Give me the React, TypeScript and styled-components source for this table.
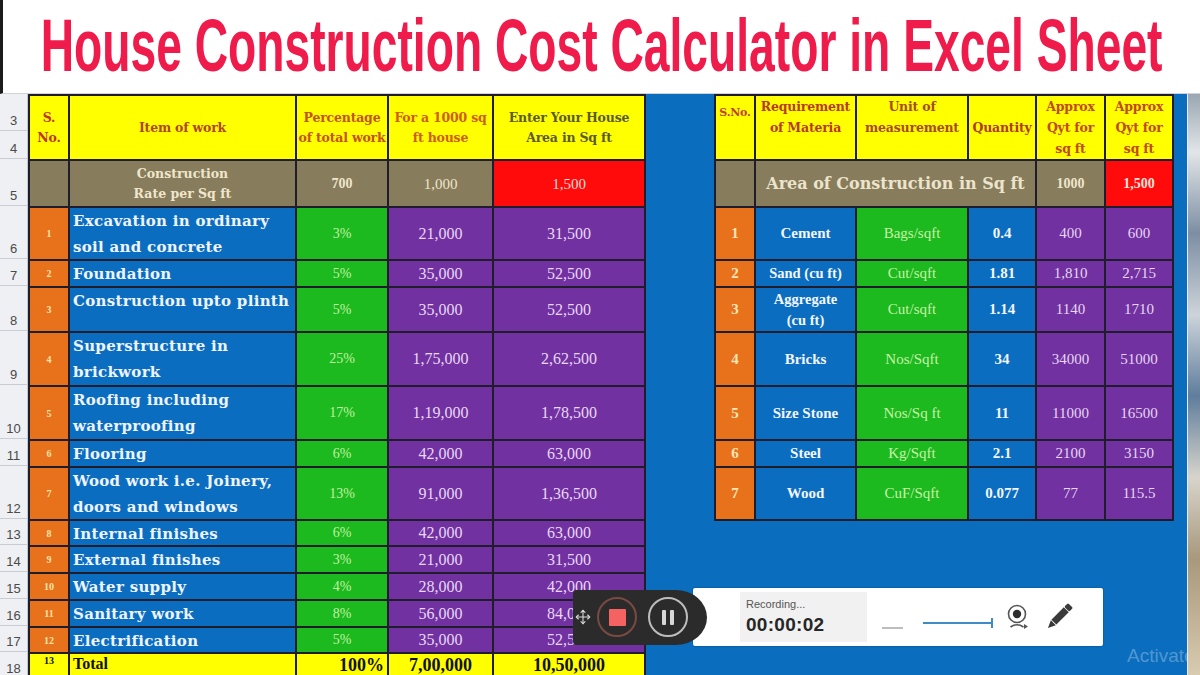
import React from "react";
import styled, { createGlobalStyle } from "styled-components";
import { Move } from "lucide-react";

const GlobalStyle = createGlobalStyle`
  html, body { margin: 0; padding: 0; width: 1200px; height: 675px; overflow: hidden; background: #fff; }
  #root { width: 1200px; height: 675px; }
  * { box-sizing: border-box; }
`;

const C = {
  yellow: "#ffff00",
  olive: "#877c5b",
  blue: "#0b6dbf",
  sheet: "#0a6dbe",
  orange: "#e8711c",
  green: "#1cb91f",
  purple: "#7131a1",
  red: "#ff0b0b",
  line: "#1f1c2c",
};

const SERIF = `"DejaVu Serif", "Liberation Serif", serif`;
const TIMES = `"Liberation Serif", "DejaVu Serif", serif`;
const SANS = `"Liberation Sans", Arial, sans-serif`;

const Page = styled.div`
  position: relative;
  width: 1200px;
  height: 675px;
  display: flex;
  flex-direction: column;
  overflow: hidden;
`;

const TitleBar = styled.header`
  height: 94px;
  flex-shrink: 0;
  display: flex;
  justify-content: center;
  padding-top: 8px;
  border-left: 3px solid #1b1b1b;
  border-bottom: 1px solid #cfd3d8;
  background: #fff;
  overflow: hidden;
`;

const Title = styled.h1`
  margin: 0;
  flex-shrink: 0;
  white-space: nowrap;
  font-family: ${SANS};
  font-weight: 700;
  font-size: 75px;
  line-height: 75px;
  color: #ee1b4b;
  transform: scaleX(0.616);
`;

const Sheet = styled.main`
  flex: 1;
  display: flex;
  align-items: flex-start;
  background: ${C.sheet};
  overflow: hidden;
`;

const RowHeads = styled.div`
  width: 28px;
  flex-shrink: 0;
  display: flex;
  flex-direction: column;
  background: #eef0f3;
  border-right: 1px solid #c3c8cf;
`;

const RowHead = styled.div<{ $h: number }>`
  height: ${(p) => p.$h}px;
  display: flex;
  align-items: flex-end;
  justify-content: center;
  padding-bottom: 2px;
  border-bottom: 1px solid #c9cdd3;
  font-family: ${SANS};
  font-size: 13px;
  color: #4a4a4a;
`;

const Grid = styled.div<{ $cols: string; $rows: string; $ml?: number }>`
  display: grid;
  grid-template-columns: ${(p) => p.$cols};
  grid-template-rows: ${(p) => p.$rows};
  gap: 2px;
  background: ${C.line};
  border: 2px solid ${C.line};
  flex-shrink: 0;
  margin-left: ${(p) => p.$ml ?? 0}px;
`;

const Cell = styled.div<{
  $bg: string;
  $color?: string;
  $align?: "left" | "center" | "right";
  $top?: boolean;
  $span?: number;
}>`
  background: ${(p) => p.$bg};
  color: ${(p) => p.$color ?? "#fff"};
  display: flex;
  align-items: ${(p) => (p.$top ? "flex-start" : "center")};
  justify-content: ${(p) =>
    p.$align === "left" ? "flex-start" : p.$align === "right" ? "flex-end" : "center"};
  text-align: ${(p) => p.$align ?? "center"};
  padding: 0 3px;
  overflow: hidden;
  white-space: nowrap;
  grid-column: ${(p) => (p.$span ? `span ${p.$span}` : "auto")};
`;

const HeadCell = styled(Cell)`
  font-family: ${SERIF};
  font-weight: 700;
  font-size: 12.5px;
  line-height: 20px;
  letter-spacing: -0.2px;
`;

const RHeadCell = styled(HeadCell)`
  line-height: 21px;
`;

const RSnoHead = styled(RHeadCell)`
  padding-top: 6px;
  font-size: 11px;
`;

const RateCell = styled(Cell)<{ $size?: number; $bold?: boolean; $serif?: boolean }>`
  font-family: ${(p) => (p.$serif ? SERIF : TIMES)};
  font-weight: ${(p) => (p.$bold ? 700 : 400)};
  font-size: ${(p) => p.$size ?? 15}px;
  line-height: 20px;
`;

const SnoCell = styled(Cell)`
  font-family: ${TIMES};
  font-weight: 700;
  font-size: 10px;
  color: #fbe3a5;
`;

const ItemCell = styled(Cell)`
  font-family: ${SERIF};
  font-weight: 700;
  font-size: 15px;
  line-height: 26px;
  letter-spacing: 0.3px;
  color: #eef4ff;
  padding-left: 3px;
`;

const PctCell = styled(Cell)`
  font-family: ${TIMES};
  font-size: 14px;
  color: #c2f2a2;
`;

const NumCell = styled(Cell)`
  font-family: ${TIMES};
  font-size: 16px;
  color: #e8d8f4;
`;

const TotalCell = styled(Cell)<{ $size?: number }>`
  font-family: ${TIMES};
  font-weight: 700;
  font-size: ${(p) => p.$size ?? 18}px;
  color: #111;
  align-items: flex-start;
  padding-top: 1px;
`;

const RSnoCell = styled(Cell)`
  font-family: ${TIMES};
  font-weight: 700;
  font-size: 15px;
  color: #fbe6b6;
`;

const RNameCell = styled(Cell)<{ $size?: number }>`
  font-family: ${TIMES};
  font-weight: 700;
  font-size: ${(p) => p.$size ?? 15}px;
  line-height: 21px;
  color: #f2f6ff;
`;

const RUnitCell = styled(Cell)`
  font-family: ${TIMES};
  font-size: 15px;
  color: #c6f4a6;
`;

const RQtyCell = styled(Cell)`
  font-family: ${TIMES};
  font-weight: 700;
  font-size: 15px;
  color: #f2f6ff;
`;

const RNumCell = styled(Cell)`
  font-family: ${TIMES};
  font-size: 15px;
  color: #e6d6f2;
`;

const BlueFill = styled.div`
  flex: 1;
`;

const Photo = styled.div`
  position: relative;
  z-index: 2;
  width: 13px;
  height: 100%;
  flex-shrink: 0;
  border-left: 1px solid #e8eef4;
  background: linear-gradient(
    180deg,
    #9aa6b2 0%,
    #e2e5e8 10%,
    #7d8ea3 24%,
    #cdd3da 38%,
    #5f7d9c 52%,
    #d8d4cc 66%,
    #a8987c 80%,
    #d9cbb0 100%
  );
`;

const Watermark = styled.div`
  position: absolute;
  z-index: 1;
  left: 1127px;
  top: 645px;
  font-family: ${SANS};
  font-size: 19px;
  color: rgba(255, 255, 255, 0.3);
`;

/* ---------- recorder overlay ---------- */
const Recorder = styled.div`
  position: absolute;
  z-index: 3;
  left: 573px;
  top: 588px;
  display: flex;
  align-items: center;
`;

const RecControls = styled.div`
  position: relative;
  z-index: 1;
  width: 134px;
  height: 55px;
  background: #2b2b2b;
  border-radius: 4px 32px 32px 4px / 4px 28px 28px 4px;
  display: flex;
  align-items: center;
  padding-left: 2px;
  color: #dcdcdc;
`;

const CircleBtn = styled.div<{ $ring: string; $ml: number }>`
  width: 40px;
  height: 40px;
  margin-left: ${(p) => p.$ml}px;
  border-radius: 50%;
  border: 2px solid ${(p) => p.$ring};
  display: flex;
  align-items: center;
  justify-content: center;
  gap: 4px;
`;

const StopSquare = styled.div`
  width: 17px;
  height: 17px;
  background: #f46262;
  border-radius: 1px;
`;

const PauseBar = styled.div`
  width: 4px;
  height: 15px;
  background: #d8d8d8;
  border-radius: 1px;
`;

const RecPanel = styled.div`
  margin-left: -14px;
  width: 410px;
  height: 58px;
  background: #fff;
  border-radius: 2px;
  box-shadow: 0 0 2px rgba(0, 0, 0, 0.35);
  display: flex;
  align-items: center;
  padding-left: 47px;
`;

const TimerBox = styled.div`
  width: 127px;
  height: 50px;
  background: #f1f1f1;
  display: flex;
  flex-direction: column;
  justify-content: center;
  padding-left: 6px;
  font-family: ${SANS};
`;

const RecLabel = styled.div`
  font-size: 11px;
  color: #555;
`;

const RecTime = styled.div`
  margin-top: 4px;
  font-size: 19px;
  font-weight: 700;
  color: #262626;
  letter-spacing: 0.3px;
`;

const Dash = styled.div`
  width: 21px;
  height: 2px;
  margin-left: 15px;
  margin-top: 22px;
  background: #bdbdbd;
`;

const Slider = styled.div`
  position: relative;
  width: 70px;
  height: 2px;
  margin-left: 20px;
  margin-top: 12px;
  background: #3f8cc4;
  &::after {
    content: "";
    position: absolute;
    right: 0;
    top: -4px;
    width: 2px;
    height: 10px;
    background: #3f8cc4;
  }
`;

const IconWrap = styled.div<{ $ml: number }>`
  margin-left: ${(p) => p.$ml}px;
  display: flex;
  align-items: center;
`;

const WebcamIcon = () => (
  <svg width="24" height="28" viewBox="0 0 24 28">
    <circle cx="11" cy="11" r="8.5" fill="#fff" stroke="#555" strokeWidth="1.6" />
    <circle cx="11" cy="11" r="4.2" fill="#2e2e2e" />
    <path d="M4.5 24 Q11 19.5 17.5 24" fill="none" stroke="#555" strokeWidth="1.6" />
    <path d="M18 21 L22 23.5 L18 26 Z" fill="#555" />
  </svg>
);

const PencilIcon = () => (
  <svg width="30" height="30" viewBox="0 0 24 24">
    <g transform="rotate(45 12 12)">
      <rect x="9.2" y="-1" width="5.6" height="4.2" rx="1" fill="#3a3a3a" />
      <rect x="9.2" y="3.8" width="5.6" height="14" fill="#3a3a3a" />
      <path d="M9.2 18.4 L14.8 18.4 L12 24.5 Z" fill="#3a3a3a" />
    </g>
  </svg>
);

/* ---------- data ---------- */
const rowHeights = [37, 28, 47, 53, 27, 45, 54, 54, 27, 53, 26, 27, 27, 27, 26, 27];

const leftRows: { n: string; item: React.ReactNode; pct: string; a: string; b: string }[] = [
  { n: "1", item: <>Excavation in ordinary<br />soil and concrete</>, pct: "3%", a: "21,000", b: "31,500" },
  { n: "2", item: "Foundation", pct: "5%", a: "35,000", b: "52,500" },
  { n: "3", item: "Construction upto plinth", pct: "5%", a: "35,000", b: "52,500" },
  { n: "4", item: <>Superstructure in<br />brickwork</>, pct: "25%", a: "1,75,000", b: "2,62,500" },
  { n: "5", item: <>Roofing including<br />waterproofing</>, pct: "17%", a: "1,19,000", b: "1,78,500" },
  { n: "6", item: "Flooring", pct: "6%", a: "42,000", b: "63,000" },
  { n: "7", item: <>Wood work i.e. Joinery,<br />doors and windows</>, pct: "13%", a: "91,000", b: "1,36,500" },
  { n: "8", item: "Internal finishes", pct: "6%", a: "42,000", b: "63,000" },
  { n: "9", item: "External finishes", pct: "3%", a: "21,000", b: "31,500" },
  { n: "10", item: "Water supply", pct: "4%", a: "28,000", b: "42,000" },
  { n: "11", item: "Sanitary work", pct: "8%", a: "56,000", b: "84,000" },
  { n: "12", item: "Electrification", pct: "5%", a: "35,000", b: "52,500" },
];

const rightRows: { n: string; name: React.ReactNode; small?: boolean; unit: string; q: string; a: string; b: string }[] = [
  { n: "1", name: "Cement", unit: "Bags/sqft", q: "0.4", a: "400", b: "600" },
  { n: "2", name: "Sand (cu ft)", small: true, unit: "Cut/sqft", q: "1.81", a: "1,810", b: "2,715" },
  { n: "3", name: <>Aggregate<br />(cu ft)</>, small: true, unit: "Cut/sqft", q: "1.14", a: "1140", b: "1710" },
  { n: "4", name: "Bricks", unit: "Nos/Sqft", q: "34", a: "34000", b: "51000" },
  { n: "5", name: "Size Stone", unit: "Nos/Sq ft", q: "11", a: "11000", b: "16500" },
  { n: "6", name: "Steel", unit: "Kg/Sqft", q: "2.1", a: "2100", b: "3150" },
  { n: "7", name: "Wood", unit: "CuF/Sqft", q: "0.077", a: "77", b: "115.5" },
];

const leftCols = "38px 225px 90px 103px 150px";
const leftRowsTpl = "63px 45px 51px 25px 43px 52px 52px 25px 51px 24px 25px 25px 25px 24px 25px";
const rightCols = "38px 99px 110px 66px 67px 66px";
const rightRowsTpl = "63px 45px 51px 25px 43px 52px 52px 25px 51px";

export default function App() {
  return (
    <>
      <GlobalStyle />
      <Page>
        <TitleBar>
          <Title>House Construction Cost Calculator in Excel Sheet</Title>
        </TitleBar>
        <Sheet>
          <RowHeads>
            {rowHeights.map((h, i) => (
              <RowHead key={i} $h={h}>
                {i + 3}
              </RowHead>
            ))}
          </RowHeads>

          <Grid $cols={leftCols} $rows={leftRowsTpl}>
            <HeadCell $bg={C.yellow} $color="#c0351e">S.<br />No.</HeadCell>
            <HeadCell $bg={C.yellow} $color="#b0461c">Item of work</HeadCell>
            <HeadCell $bg={C.yellow} $color="#c4531a">Percentage<br />of total work</HeadCell>
            <HeadCell $bg={C.yellow} $color="#cf5d12">For a 1000 sq<br />ft house</HeadCell>
            <HeadCell $bg={C.yellow} $color="#5c5a30">Enter Your House<br />Area in Sq ft</HeadCell>

            <RateCell $bg={C.olive} />
            <RateCell $bg={C.olive} $color="#efe6cc" $serif $bold $size={12.5}>
              Construction<br />Rate per Sq ft
            </RateCell>
            <RateCell $bg={C.olive} $color="#efe6cc" $bold $size={14}>700</RateCell>
            <RateCell $bg={C.olive} $color="#efe6cc">1,000</RateCell>
            <RateCell $bg={C.red} $color="#ffdcd4">1,500</RateCell>

            {leftRows.map((r) => (
              <React.Fragment key={r.n}>
                <SnoCell $bg={C.orange}>{r.n}</SnoCell>
                <ItemCell $bg={C.blue} $align="left" $top>{r.item}</ItemCell>
                <PctCell $bg={C.green}>{r.pct}</PctCell>
                <NumCell $bg={C.purple}>{r.a}</NumCell>
                <NumCell $bg={C.purple}>{r.b}</NumCell>
              </React.Fragment>
            ))}

            <TotalCell $bg={C.yellow} $size={10}>13</TotalCell>
            <TotalCell $bg={C.yellow} $align="left" $size={16}>Total</TotalCell>
            <TotalCell $bg={C.yellow} $align="right">100%</TotalCell>
            <TotalCell $bg={C.yellow}>7,00,000</TotalCell>
            <TotalCell $bg={C.yellow}>10,50,000</TotalCell>
          </Grid>

          <Grid $cols={rightCols} $rows={rightRowsTpl} $ml={68}>
            <RSnoHead $bg={C.yellow} $color="#c04030" $top>S.No.</RSnoHead>
            <RHeadCell $bg={C.yellow} $color="#b83a20" $top>Requirement<br />of Materia</RHeadCell>
            <RHeadCell $bg={C.yellow} $color="#a84a20" $top>Unit of<br />measurement</RHeadCell>
            <RHeadCell $bg={C.yellow} $color="#b03a20">Quantity</RHeadCell>
            <RHeadCell $bg={C.yellow} $color="#c04a18">Approx<br />Qyt for<br />sq ft</RHeadCell>
            <RHeadCell $bg={C.yellow} $color="#c04a18">Approx<br />Qyt for<br />sq ft</RHeadCell>

            <RateCell $bg={C.olive} />
            <RateCell $bg={C.olive} $span={3} $color="#ece4cc" $serif $bold $size={16}>
              Area of Construction in Sq ft
            </RateCell>
            <RateCell $bg={C.olive} $color="#efe6cc" $bold $size={14}>1000</RateCell>
            <RateCell $bg={C.red} $color="#ffe4dc" $bold $size={14}>1,500</RateCell>

            {rightRows.map((r) => (
              <React.Fragment key={r.n}>
                <RSnoCell $bg={C.orange}>{r.n}</RSnoCell>
                <RNameCell $bg={C.blue} $size={r.small ? 14.5 : 15}>{r.name}</RNameCell>
                <RUnitCell $bg={C.green}>{r.unit}</RUnitCell>
                <RQtyCell $bg={C.blue}>{r.q}</RQtyCell>
                <RNumCell $bg={C.purple}>{r.a}</RNumCell>
                <RNumCell $bg={C.purple}>{r.b}</RNumCell>
              </React.Fragment>
            ))}
          </Grid>

          <BlueFill />
          <Photo />
        </Sheet>

        <Watermark>Activate</Watermark>

        <Recorder>
          <RecControls>
            <Move size={16} strokeWidth={1.6} />
            <CircleBtn $ring="#7a4a42" $ml={6}>
              <StopSquare />
            </CircleBtn>
            <CircleBtn $ring="#bdbdbd" $ml={11}>
              <PauseBar />
              <PauseBar />
            </CircleBtn>
          </RecControls>
          <RecPanel>
            <TimerBox>
              <RecLabel>Recording...</RecLabel>
              <RecTime>00:00:02</RecTime>
            </TimerBox>
            <Dash />
            <Slider />
            <IconWrap $ml={13}>
              <WebcamIcon />
            </IconWrap>
            <IconWrap $ml={14}>
              <PencilIcon />
            </IconWrap>
          </RecPanel>
        </Recorder>
      </Page>
    </>
  );
}
